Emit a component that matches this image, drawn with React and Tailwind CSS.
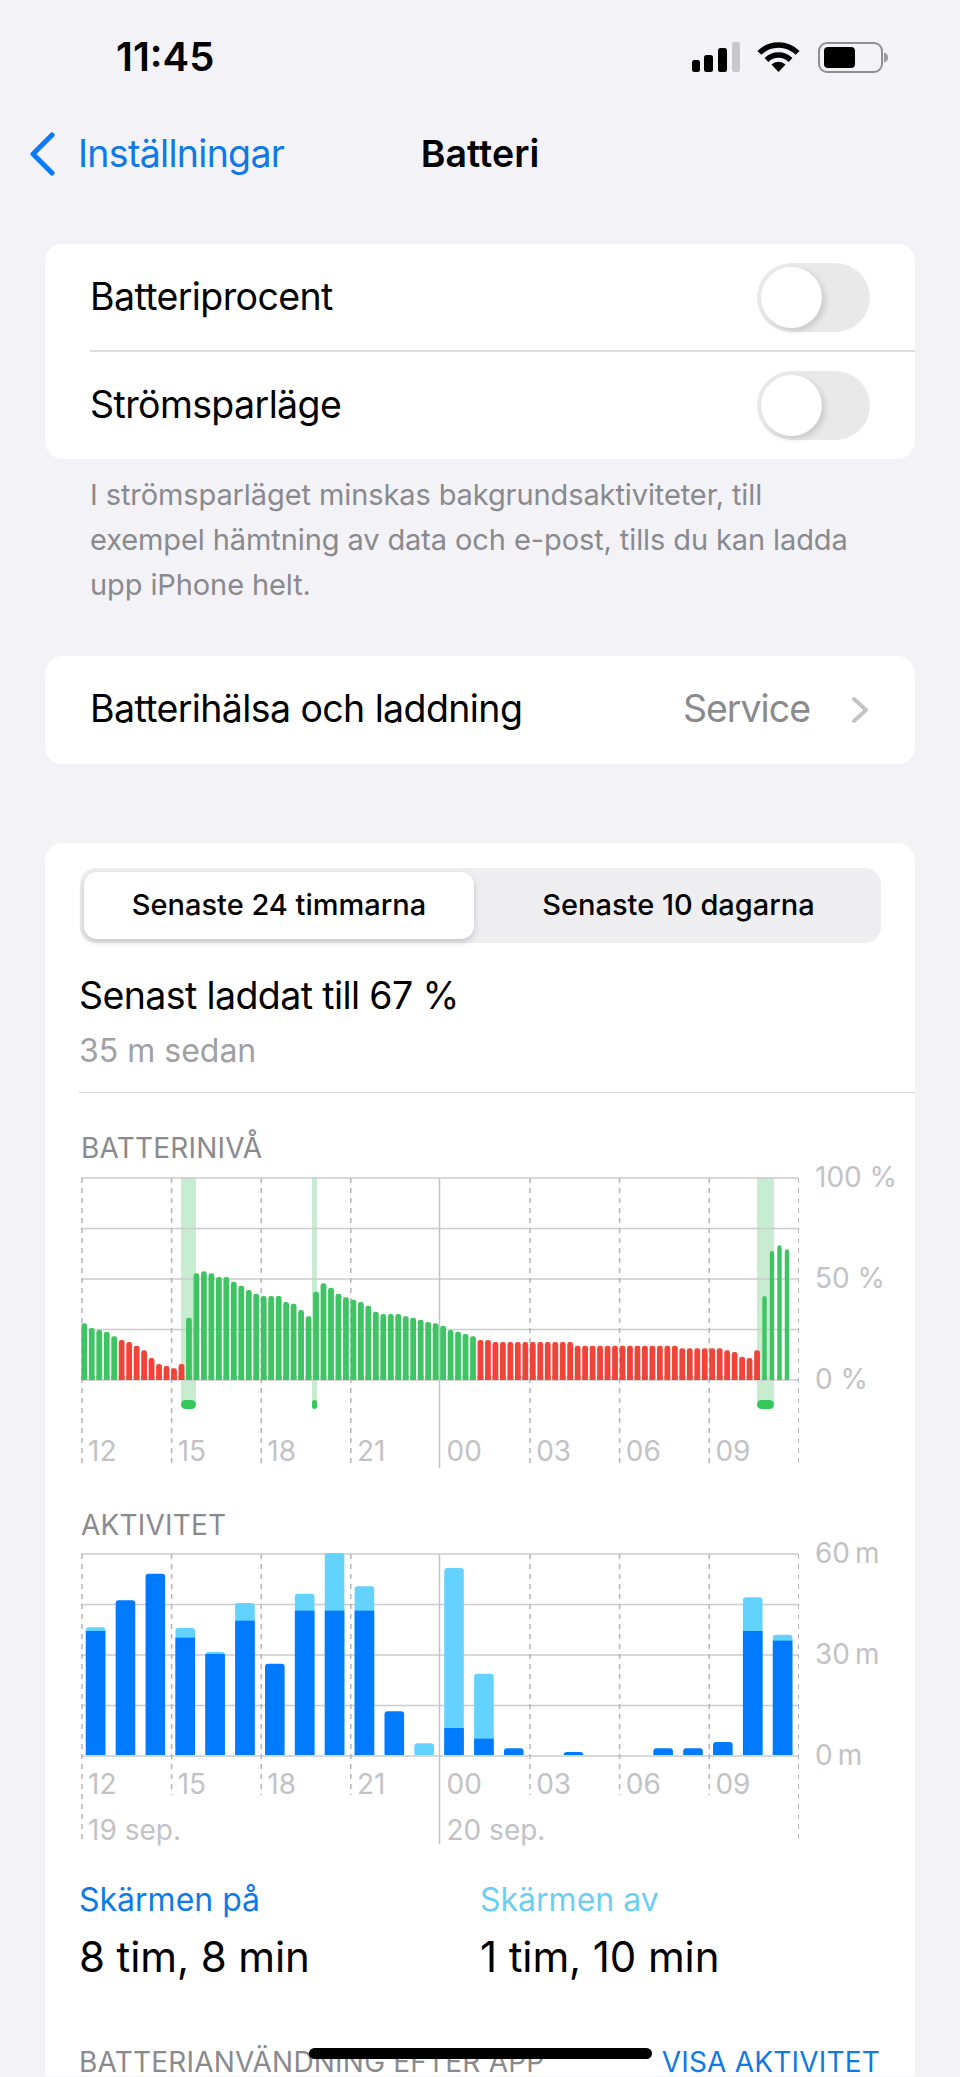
import React from 'react';

// top of each 15-minute bar, measured on a 606-unit tall scale from the baseline
const batteryBars = [
  170, 156, 150, 145, 131, 120, 114, 103, 89, 66, 48, 42, 35, 48, 187, 320, 326, 320, 309, 309,
  295, 283, 270, 259, 252, 252, 252, 234, 229, 210, 191, 265, 290, 277, 259, 248, 241, 234, 223, 205,
  198, 198, 198, 191, 187, 181, 174, 170, 163, 150, 145, 138, 131, 120, 120, 114,
  114, 114, 114, 114, 114, 114, 114, 114, 114, 114,
  103, 103, 103, 103, 103, 103, 103, 103, 103, 103, 103, 103, 103, 103,
  95, 95, 95, 95, 95, 95, 89, 84, 70, 66, 89,
  252, 387, 404, 392,
];

const isRed = (i) => (i >= 5 && i <= 13) || (i >= 53 && i <= 90);

// screen-on (dark) and total (light) per hour, same 606-unit scale
const activity = [
  [372, 383], [464, 464], [544, 544], [352, 381], [303, 309], [403, 456], [274, 274], [433, 484],
  [433, 606], [433, 506], [131, 131], [0, 35], [81, 561], [49, 244], [20, 20], [0, 0],
  [9, 9], [0, 0], [0, 0], [20, 20], [20, 20], [39, 39], [372, 473], [343, 361],
];

const hours = ['12', '15', '18', '21', '00', '03', '06', '09'];
const fontStack = { fontFamily: 'Inter, "Liberation Sans", sans-serif' };

function toPx(v) {
  return (v / 606) * 202;
}

function ChartGrid({ tall }) {
  const xs = [0, 89.6, 179.2, 268.8, 448, 537.6, 627.2, 716.8];
  const short = tall ? 202 + 85 : 242;
  return (
    <g>
      {[0, 50.5, 101, 151.5, 202].map((y) => (
        <line key={y} x1="0" x2="717" y1={y + 1} y2={y + 1} stroke="#cbcbce" strokeWidth="1.5" />
      ))}
      {xs.map((x, i) => (
        <line
          key={x}
          x1={x + 1}
          x2={x + 1}
          y1="1"
          y2={i === 0 || i === 7 ? 289 : short}
          stroke="#b4b4b8"
          strokeWidth="1.5"
          strokeDasharray="5 5"
        />
      ))}
      <line x1="358.5" x2="358.5" y1="1" y2="291" stroke="#c4c4c7" strokeWidth="1.5" />
    </g>
  );
}

function BatteryChart() {
  return (
    <svg width="718" height="292" className="block">
      {/* charging windows sit behind the grid and bars */}
      <rect x="100" y="0" width="15" height="228" fill="#c8ecd0" />
      <rect x="231" y="0" width="5" height="228" fill="#c8ecd0" />
      <rect x="676" y="0" width="17" height="228" fill="#c8ecd0" />
      <ChartGrid tall />
      {batteryBars.map((v, i) => {
        const h = toPx(v);
        const w = i >= 91 ? 4.4 : 5.8;
        const fill = isRed(i) ? '#f04438' : '#3ec463';
        return (
          <g key={i} fill={fill}>
            <rect x={3.3 + i * 7.475 - w / 2} y={203 - h} width={w} height={h} rx="2.4" />
            <rect x={3.3 + i * 7.475 - w / 2} y={199} width={w} height="4" />
          </g>
        );
      })}
      <rect x="100" y="223" width="15" height="9" rx="4.5" fill="#34c759" />
      <rect x="231" y="223" width="5" height="9" rx="2.5" fill="#34c759" />
      <rect x="676" y="223" width="17" height="9" rx="4.5" fill="#34c759" />
    </svg>
  );
}

function ActivityChart() {
  return (
    <svg width="718" height="292" className="block">
      <ChartGrid />
      {activity.map(([on, total], i) => {
        if (!total) return null;
        const x = 4.8 + i * 29.87;
        const r = Math.min(3, toPx(on));
        return (
          <g key={i}>
            {total > on && (
              <path d={`M${x} 202V${205 - toPx(total)}q0 -3 3 -3h13.6q3 0 3 3V202z`} fill="#64d2ff" />
            )}
            {on > 0 &&
              (total > on ? (
                <rect x={x} y={202 - toPx(on)} width="19.6" height={toPx(on)} fill="#007aff" />
              ) : (
                <path
                  d={`M${x} 202V${202 - toPx(on) + r}q0 -${r} 3 -${r}h13.6q3 0 3 ${r}V202z`}
                  fill="#007aff"
                />
              ))}
          </g>
        );
      })}
    </svg>
  );
}

function Toggle() {
  return (
    <div className="h-[69px] w-[113px] rounded-full bg-[#e9e9ea] p-[4px]">
      <div className="h-[61px] w-[61px] rounded-full bg-white shadow-[3px_3px_6px_rgba(0,0,0,0.14)]" />
    </div>
  );
}

function ChartBlock({ title, ticks, tickClass, children, dates }) {
  return (
    <div>
      <div className="h-[34px] pl-[2px] text-[28px] leading-[34px] tracking-[0.2px] text-[#8a8a8e]">{title}</div>
      <div className={`${dates ? 'mt-[11px]' : 'mt-[12px]'} relative flex pl-[1px]`}>
        {children}
        <div className="absolute left-[736px] top-[-17px] flex h-[236px] flex-col justify-between text-[28px] leading-[34px] text-[#c2c2c6]">
          {ticks.map((t) => (
            <span key={t}>{t}</span>
          ))}
        </div>
        <div className={`absolute left-[1px] ${tickClass} grid w-[717px] grid-cols-8 text-[28px] leading-[34px] text-[#c2c2c6]`}>
          {hours.map((h) => (
            <span key={h} className="pl-[8px]">{h}</span>
          ))}
        </div>
        {dates && (
          <div className="absolute left-[1px] top-[260px] grid w-[717px] grid-cols-2 text-[28px] leading-[34px] text-[#c2c2c6]">
            {dates.map((d) => (
              <span key={d} className="pl-[8px]">{d}</span>
            ))}
          </div>
        )}
      </div>
    </div>
  );
}

export default function App() {
  return (
    <div className="relative h-[2077px] w-[960px] overflow-hidden bg-[#f2f2f7] text-black" style={fontStack}>
      {/* status bar */}
      <div className="flex h-[114px] items-center pl-[116px] pr-[72px]">
        <span className="text-[40px] font-semibold leading-none">11:45</span>
        <div className="ml-auto flex items-center">
          <svg width="48" height="30" className="mr-[17px]">
            <rect x="0" y="18" width="8" height="12" rx="2.5" />
            <rect x="12" y="13" width="9" height="17" rx="2.5" />
            <rect x="26" y="6" width="9" height="24" rx="2.5" />
            <rect x="40" y="0" width="8" height="30" rx="2.5" fill="#c7c7cc" />
          </svg>
          <svg width="43" height="32" viewBox="0 0 43 32" className="mr-[18px]">
            <path d="M2.4 11.9A27 27 0 0 1 40.6 11.9" fill="none" stroke="#000" strokeWidth="5.5" />
            <path d="M9.5 19A17 17 0 0 1 33.5 19" fill="none" stroke="#000" strokeWidth="5.5" />
            <path d="M21.5 31L14.5 23.5A10 10 0 0 1 28.5 23.5Z" />
          </svg>
          <svg width="70" height="31" viewBox="0 0 70 31">
            <rect x="1" y="1" width="63" height="29" rx="8" fill="none" stroke="#8e8e93" strokeWidth="2" />
            <rect x="6" y="5" width="31" height="21" rx="4" />
            <path d="M66 10.5q4 1 4 5t-4 5z" fill="#9a9a9e" />
          </svg>
        </div>
      </div>

      {/* navigation bar */}
      <div className="relative flex h-[80px] items-center justify-center">
        <div className="absolute left-[29px] flex items-center">
          <svg width="26" height="44" viewBox="0 0 26 44">
            <path d="M23 3L4 22L23 41" fill="none" stroke="#0a7aff" strokeWidth="5" strokeLinecap="round" strokeLinejoin="round" />
          </svg>
          <span className="ml-[23px] text-[37.5px] leading-[44px] tracking-[-0.7px] text-[#0f7ae5]">Inställningar</span>
        </div>
        <span className="text-[37.5px] font-semibold leading-[44px]">Batteri</span>
      </div>

      <div className="mx-[45px] mt-[50px]">
        {/* toggles */}
        <div className="rounded-[18px] bg-white">
          <div className="flex h-[106px] items-center justify-between px-[45px]">
            <span className="pt-[1px] text-[37.5px] tracking-[-0.6px]">Batteriprocent</span>
            <Toggle />
          </div>
          <div className="ml-[45px] h-[1.5px] bg-[#dcdcde]" />
          <div className="flex h-[107px] items-center justify-between px-[45px]">
            <span className="text-[37.5px] tracking-[-0.6px]">Strömsparläge</span>
            <Toggle />
          </div>
        </div>

        <p className="mt-[13px] pl-[45px] pr-[20px] text-[29px] leading-[45px] tracking-[-0.1px] text-[#8a8a8e]">
          I strömsparläget minskas bakgrundsaktiviteter, till
          <br />
          exempel hämtning av data och e-post, tills du kan ladda
          <br />
          upp iPhone helt.
        </p>

        {/* battery health row */}
        <div className="mt-[49px] flex h-[108px] items-center rounded-[18px] bg-white pl-[45px] pr-[46px]">
          <span className="text-[37.5px] tracking-[-0.6px]">Batterihälsa och laddning</span>
          <span className="ml-auto text-[37.5px] tracking-[-1px] text-[#8a8a8e]">Service</span>
          <svg width="18" height="28" viewBox="0 0 18 28" className="ml-[41px]">
            <path d="M3 3L15 14L3 25" fill="none" stroke="#c4c4c7" strokeWidth="4" strokeLinecap="round" strokeLinejoin="round" />
          </svg>
        </div>

        {/* usage card runs off the bottom of the page */}
        <div className="mt-[79px] rounded-t-[18px] bg-white pl-[34px] pt-[25px]">
          <div className="ml-[1px] flex h-[75px] w-[801px] rounded-[16px] bg-[#eeeef0] p-[4px] text-[29px] font-medium">
            <div className="flex h-[67px] w-[390px] items-center justify-center rounded-[13px] bg-white shadow-[0_3px_6px_rgba(0,0,0,0.18)]">
              Senaste 24 timmarna
            </div>
            <div className="flex flex-1 items-center justify-center pl-[6px]">Senaste 10 dagarna</div>
          </div>

          <div className="mt-[31px] text-[37.5px] leading-[44px] tracking-[-0.6px]">Senast laddat till 67 %</div>
          <div className="mt-[13px] text-[32px] leading-[40px] text-[#a0a0a4]">35 m sedan</div>
          <div className="mt-[21px] h-[1.5px] bg-[#d8d8dc]" />

          <div className="mt-[38px]">
            <ChartBlock title="BATTERINIVÅ" ticks={['100 %', '50 %', '0 %']} tickClass="top-[257px]">
              <div className="ml-[1px]">
                <BatteryChart />
              </div>
            </ChartBlock>
          </div>

          <div className="mt-[39px]">
            <ChartBlock
              title="AKTIVITET"
              ticks={['60\u2009m', '30\u2009m', '0\u2009m']}
              tickClass="top-[214px]"
              dates={['19 sep.', '20 sep.']}
            >
              <div className="ml-[1px]">
                <ActivityChart />
              </div>
            </ChartBlock>
          </div>

          <div className="mt-[35px] grid w-[801px] grid-cols-[401px_1fr]">
            <div>
              <div className="text-[32px] leading-[40px] text-[#0f7ae5]">Skärmen på</div>
              <div className="mt-[12px] text-[42px] leading-[50px] tracking-[-0.1px]">8 tim, 8 min</div>
            </div>
            <div>
              <div className="text-[32px] leading-[40px] text-[#6ccff2]">Skärmen av</div>
              <div className="mt-[12px] text-[42px] leading-[50px] tracking-[-0.1px]">1 tim, 10 min</div>
            </div>
          </div>

          <div className="mt-[66px] flex h-[28px] w-[801px] items-center justify-between text-[28px] leading-[28px] tracking-[0.2px]">
            <span className="text-[#8a8a8e]">BATTERIANVÄNDNING EFTER APP</span>
            <span className="text-[#0f7ae5]">VISA AKTIVITET</span>
          </div>
        </div>
      </div>

      {/* home indicator floats over the scrolling content */}
      <div className="absolute left-[309px] top-[2048px] h-[11px] w-[343px] rounded-full bg-black" />
    </div>
  );
}
